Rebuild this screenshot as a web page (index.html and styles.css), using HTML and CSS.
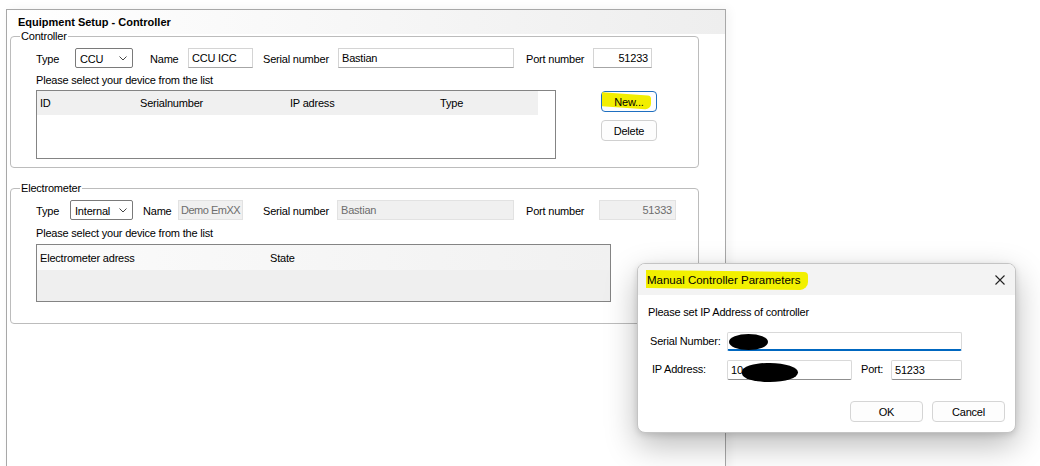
FILE: index.html
```html
<!DOCTYPE html>
<html lang="en">
<head>
    <meta charset="UTF-8">
    <title>Equipment Setup - Controller</title>
    <link rel="stylesheet" href="styles.css">
</head>
<body>
    <div class="window">
        <div class="window-title">Equipment Setup - Controller</div>

        <fieldset class="group group-controller">
            <legend>Controller</legend>
            <div class="field-row">
                <span class="lbl" style="width: 39px">Type</span>
                <div class="combo" style="width: 58px"><span>CCU</span><svg width="8" height="5" viewBox="0 0 8 5"><path d="M0.5 0.5 L4 4 L7.5 0.5" fill="none" stroke="#444" stroke-width="1"/></svg></div>
                <span class="lbl" style="width: 38px; margin-left: 17px">Name</span>
                <div class="textbox" style="width: 65px">CCU ICC</div>
                <span class="lbl" style="width: 75px; margin-left: 10px">Serial number</span>
                <div class="textbox" style="width: 176px">Bastian</div>
                <span class="lbl" style="width: 67px; margin-left: 12px">Port number</span>
                <div class="textbox num" style="width: 59px">51233</div>
            </div>
            <div class="hint">Please select your device from the list</div>
            <div class="list-row">
                <div class="listview list-controller">
                    <div class="list-head">
                        <span style="width: 100px">ID</span>
                        <span style="width: 150px">Serialnumber</span>
                        <span style="width: 150px">IP adress</span>
                        <span style="width: 101px">Type</span>
                    </div>
                </div>
                <div class="side-buttons">
                    <button class="btn btn-focus"><span>New...</span></button>
                    <button class="btn">Delete</button>
                </div>
            </div>
        </fieldset>

        <fieldset class="group group-electrometer">
            <legend>Electrometer</legend>
            <div class="field-row">
                <span class="lbl" style="width: 34px">Type</span>
                <div class="combo" style="width: 63px"><span>Internal</span><svg width="8" height="5" viewBox="0 0 8 5"><path d="M0.5 0.5 L4 4 L7.5 0.5" fill="none" stroke="#444" stroke-width="1"/></svg></div>
                <span class="lbl" style="width: 35px; margin-left: 10px">Name</span>
                <div class="textbox disabled tight" style="width: 65px">Demo EmXX</div>
                <span class="lbl" style="width: 74px; margin-left: 20px">Serial number</span>
                <div class="textbox disabled" style="width: 177px">Bastian</div>
                <span class="lbl" style="width: 73px; margin-left: 12px">Port number</span>
                <div class="textbox disabled num" style="width: 77px">51333</div>
            </div>
            <div class="hint hint-em">Please select your device from the list</div>
            <div class="listview list-electrometer">
                <div class="list-head">
                    <span style="width: 230px">Electrometer adress</span>
                    <span style="width: 200px">State</span>
                </div>
            </div>
        </fieldset>
    </div>

    <div class="dialog">
        <div class="dialog-title">
            <span class="marker">Manual Controller Parameters</span>
            <svg class="close" width="10" height="10" viewBox="0 0 10 10"><path d="M0.5 0.5 L9.5 9.5 M9.5 0.5 L0.5 9.5" stroke="#222" stroke-width="1.1"/></svg>
        </div>
        <div class="dialog-body">
            <div class="intro">Please set IP Address of controller</div>
            <div class="dlg-row">
                <span class="dlg-lbl" style="width: 77px; margin-left: 2px">Serial Number:</span>
                <div class="dlg-input active" style="width: 235px"><i class="blob blob-serial"></i></div>
            </div>
            <div class="dlg-row row-ip">
                <span class="dlg-lbl" style="width: 75px; margin-left: 4px">IP Address:</span>
                <div class="dlg-input" style="width: 125px">10<i class="blob blob-ip"></i></div>
                <span class="dlg-lbl" style="width: 30px; margin-left: 9px">Port:</span>
                <div class="dlg-input" style="width: 71px">51233</div>
            </div>
            <div class="dlg-buttons">
                <button class="btn dlg-btn">OK</button>
                <button class="btn dlg-btn">Cancel</button>
            </div>
        </div>
    </div>
</body>
</html>
```

FILE: styles.css
```css
* {
    box-sizing: border-box;
}
body {
    margin: 0;
    width: 1040px;
    height: 466px;
    overflow: hidden;
    position: relative;
    background: #fff;
    font-family: "Liberation Sans", Arial, sans-serif;
    font-size: 11px;
    letter-spacing: -0.2px;
    color: #000;
}
.window {
    margin: 9px 0 0 6px;
    width: 720px;
    height: 480px;
    border: 1px solid #a8a8a8;
    background: #fff;
    box-shadow: 3px 0 10px rgba(0, 0, 0, 0.05);
}
.window-title {
    height: 24px;
    line-height: 24px;
    padding-left: 11px;
    font-weight: bold;
    letter-spacing: 0;
    background: linear-gradient(to right, #ffffff, #eeeeee);
}
.group {
    margin: -5px 0 0 3px;
    width: 689px;
    padding: 5px 0 8px 25px;
    border: 1px solid #bcbcbc;
    border-radius: 4px;
    min-width: 0;
}
.group legend {
    padding: 0 1px;
    margin-left: -16px;
    line-height: 14px;
}
.group-electrometer {
    margin-top: 13px;
    padding-bottom: 21px;
}
.field-row {
    display: flex;
    align-items: center;
    height: 20px;
}
.lbl {
    flex: none;
    white-space: nowrap;
    padding-top: 2px;
}
.combo {
    flex: none;
    height: 20px;
    border: 1px solid #7a7a7a;
    border-radius: 2px;
    display: flex;
    align-items: center;
    justify-content: space-between;
    padding: 1px 5px 0 4px;
    background: #fff;
}
.textbox {
    flex: none;
    height: 20px;
    line-height: 18px;
    padding: 0 3px;
    border: 1px solid #d4d4d4;
    border-bottom-color: #a6a6a6;
    background: #fff;
    white-space: nowrap;
    overflow: hidden;
}
.textbox.num {
    text-align: right;
}
.textbox.disabled {
    background: #f0f0f0;
    border-color: #e2e2e2;
    color: #6d6d6d;
}
.textbox.tight {
    padding: 0 2px;
    letter-spacing: -0.5px;
}
.hint {
    margin-top: 6px;
    line-height: 13px;
}
.hint-em {
    margin-top: 7px;
}
.list-row {
    display: flex;
    margin-top: 3px;
}
.listview {
    border: 1px solid #848484;
    background: #fff;
}
.list-controller {
    width: 520px;
    height: 69px;
}
.list-electrometer {
    margin-top: 4px;
    width: 575px;
    height: 58px;
    background: #efefef;
}
.list-head {
    display: flex;
    height: 24px;
    line-height: 25px;
    width: 501px;
    background: #f0f0f0;
}
.list-head span {
    flex: none;
    padding-left: 3px;
}
.list-electrometer .list-head {
    width: 100%;
    height: 25px;
    line-height: 26px;
    background: linear-gradient(to right, #fbfbfb, #f1f1f1);
}
.side-buttons {
    display: flex;
    flex-direction: column;
    gap: 8px;
    margin: 1px 0 0 45px;
}
.btn {
    font-family: inherit;
    font-size: 11px;
    letter-spacing: -0.2px;
    color: #000;
    width: 56px;
    height: 21px;
    padding: 0;
    background: #fdfdfd;
    border: 1px solid #d0d0d0;
    border-radius: 4px;
}
.btn-focus {
    position: relative;
    border-color: #1f6fc0;
}
.btn-focus::before {
    content: "";
    position: absolute;
    left: 0;
    top: 2px;
    width: 49px;
    height: 14px;
    background: #f2ee00;
    transform: skewY(4deg);
    border-radius: 0 3px 6px 0;
}
.btn-focus span {
    position: relative;
}

/* dialog on top */
.dialog {
    position: absolute;
    left: 637px;
    top: 263px;
    width: 379px;
    height: 170px;
    background: #fff;
    border: 1px solid #c4c4c4;
    border-radius: 8px;
    overflow: hidden;
    box-shadow: 0 12px 32px rgba(0, 0, 0, 0.28), 0 2px 6px rgba(0, 0, 0, 0.12);
}
.dialog-title {
    height: 31px;
    background: #f3f3f3;
    display: flex;
    align-items: center;
    justify-content: space-between;
    padding: 1px 10px 0 8px;
    font-size: 11.5px;
    letter-spacing: 0;
}
.marker {
    position: relative;
    z-index: 0;
    padding: 0 1px;
}
.marker::before {
    content: "";
    position: absolute;
    z-index: -1;
    left: 0;
    right: -7px;
    top: -3px;
    bottom: -3px;
    background: #f2f000;
    transform: skewY(0.7deg);
    border-radius: 0 4px 8px 0;
}
.dialog-body {
    padding: 11px 10px 0 10px;
}
.intro {
    line-height: 13px;
}
.dlg-row {
    display: flex;
    align-items: center;
    margin-top: 13px;
}
.row-ip {
    margin-top: 9px;
}
.dlg-lbl {
    flex: none;
    white-space: nowrap;
    margin-top: -2px;
}
.dlg-input {
    flex: none;
    position: relative;
    height: 20px;
    line-height: 19px;
    padding: 0 3px;
    border: 1px solid #d9d9d9;
    border-bottom-color: #8f8f8f;
    border-radius: 2px;
    background: #fff;
}
.dlg-input.active {
    height: 19px;
    border-bottom: 2px solid #0067c0;
}
.blob {
    position: absolute;
    background: #000;
    border-radius: 50%;
}
.blob-serial {
    left: 1px;
    top: 1px;
    width: 39px;
    height: 16px;
}
.blob-ip {
    left: 14px;
    top: 2px;
    width: 56px;
    height: 19px;
    border-radius: 45% 50% 50% 45%;
}
.dlg-buttons {
    display: flex;
    justify-content: flex-end;
    gap: 9px;
    margin-top: 21px;
}
.dlg-btn {
    width: 73px;
    border-color: #d5d5d5;
}
```
